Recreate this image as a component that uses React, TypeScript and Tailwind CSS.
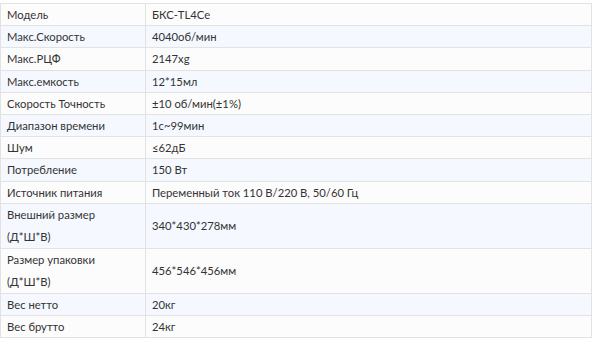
import React from "react";

const rows: [string, string][] = [
  ["Модель", "БКС-TL4Ce"],
  ["Макс.Скорость", "4040об/мин"],
  ["Макс.РЦФ", "2147xg"],
  ["Макс.емкость", "12*15мл"],
  ["Скорость Точность", "±10 об/мин(±1%)"],
  ["Диапазон времени", "1с~99мин"],
  ["Шум", "≤62дБ"],
  ["Потребление", "150 Вт"],
  ["Источник питания", "Переменный ток 110 В/220 В, 50/60 Гц"],
  ["Внешний размер (Д*Ш*В)", "340*430*278мм"],
  ["Размер упаковки (Д*Ш*В)", "456*546*456мм"],
  ["Вес нетто", "20кг"],
  ["Вес брутто", "24кг"],
];

export default function App() {
  return (
    <div className="w-[592px] h-[339px] bg-white pt-[3px] overflow-hidden">
      <table className="w-[592px] border-collapse font-[Lato,sans-serif] text-[11.25px] leading-[21.2px] text-[#333333]">
        <tbody>
          {rows.map(([k, v], i) => (
            <tr key={k} className={i % 2 === 0 ? "bg-[#fcfcfc]" : "bg-[#f5f9ff]"}>
              <td className="w-[145px] border border-[#e2e2e2] pl-[6px] pr-[6px] align-middle">
                {k.includes("(") ? (
                  <>
                    <div className="leading-[22px]">{k.split(" (")[0]}</div>
                    <div className="leading-[22px]">({k.split(" (")[1]}</div>
                  </>
                ) : (
                  k
                )}
              </td>
              <td className="border border-[#e2e2e2] pl-[6px] align-middle">{v}</td>
            </tr>
          ))}
        </tbody>
      </table>
    </div>
  );
}
